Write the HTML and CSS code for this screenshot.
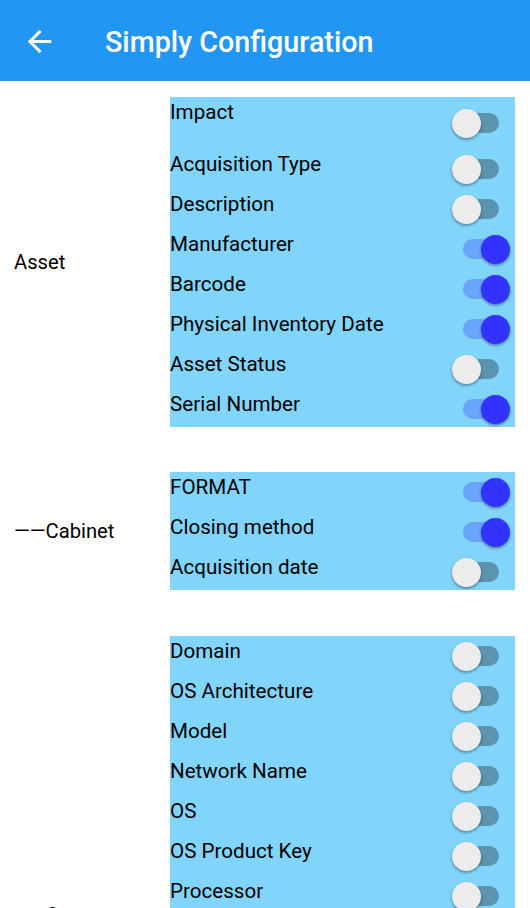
FILE: index.html
```html
<!DOCTYPE html>
<html lang="en">
<head>
<meta charset="utf-8">
<title>Simply Configuration</title>
<link rel="stylesheet" href="styles.css">
</head>
<body>
<header class="appbar">
  <button class="back" aria-label="Back">
    <svg viewBox="0 0 24 24" width="35" height="35"><path fill="#fff" d="M20 11H7.83l5.59-5.59L12 4l-8 8 8 8 1.41-1.41L7.83 13H20v-2z"/></svg>
  </button>
  <h1 class="title">Simply Configuration</h1>
</header>
<main class="content">
  <section class="group">
    <div class="group-label">Asset</div>
    <div class="panel">
      <div class="row row-tall"><span class="row-label">Impact</span><span class="switch"><span class="track"></span><span class="thumb"></span></span></div>
      <div class="row"><span class="row-label">Acquisition Type</span><span class="switch"><span class="track"></span><span class="thumb"></span></span></div>
      <div class="row"><span class="row-label">Description</span><span class="switch"><span class="track"></span><span class="thumb"></span></span></div>
      <div class="row"><span class="row-label">Manufacturer</span><span class="switch on"><span class="track"></span><span class="thumb"></span></span></div>
      <div class="row"><span class="row-label">Barcode</span><span class="switch on"><span class="track"></span><span class="thumb"></span></span></div>
      <div class="row"><span class="row-label">Physical Inventory Date</span><span class="switch on"><span class="track"></span><span class="thumb"></span></span></div>
      <div class="row"><span class="row-label">Asset Status</span><span class="switch"><span class="track"></span><span class="thumb"></span></span></div>
      <div class="row"><span class="row-label">Serial Number</span><span class="switch on"><span class="track"></span><span class="thumb"></span></span></div>
    </div>
  </section>
  <section class="group">
    <div class="group-label">——Cabinet</div>
    <div class="panel">
      <div class="row"><span class="row-label">FORMAT</span><span class="switch on"><span class="track"></span><span class="thumb"></span></span></div>
      <div class="row"><span class="row-label">Closing method</span><span class="switch on"><span class="track"></span><span class="thumb"></span></span></div>
      <div class="row"><span class="row-label">Acquisition date</span><span class="switch"><span class="track"></span><span class="thumb"></span></span></div>
    </div>
  </section>
  <section class="group group-last">
    <div class="group-label">——Computer</div>
    <div class="panel">
      <div class="row"><span class="row-label">Domain</span><span class="switch"><span class="track"></span><span class="thumb"></span></span></div>
      <div class="row"><span class="row-label">OS Architecture</span><span class="switch"><span class="track"></span><span class="thumb"></span></span></div>
      <div class="row"><span class="row-label">Model</span><span class="switch"><span class="track"></span><span class="thumb"></span></span></div>
      <div class="row"><span class="row-label">Network Name</span><span class="switch"><span class="track"></span><span class="thumb"></span></span></div>
      <div class="row"><span class="row-label">OS</span><span class="switch"><span class="track"></span><span class="thumb"></span></span></div>
      <div class="row"><span class="row-label">OS Product Key</span><span class="switch"><span class="track"></span><span class="thumb"></span></span></div>
      <div class="row"><span class="row-label">Processor</span><span class="switch"><span class="track"></span><span class="thumb"></span></span></div>
      <div class="row"><span class="row-label">RAM</span><span class="switch"><span class="track"></span><span class="thumb"></span></span></div>
      <div class="row"><span class="row-label">Hard Disk</span><span class="switch"><span class="track"></span><span class="thumb"></span></span></div>
      <div class="row"><span class="row-label">IP Address</span><span class="switch"><span class="track"></span><span class="thumb"></span></span></div>
      <div class="row"><span class="row-label">MAC Address</span><span class="switch"><span class="track"></span><span class="thumb"></span></span></div>
      <div class="row"><span class="row-label">OS Version</span><span class="switch"><span class="track"></span><span class="thumb"></span></span></div>
      <div class="row"><span class="row-label">Service Pack</span><span class="switch"><span class="track"></span><span class="thumb"></span></span></div>
      <div class="row"><span class="row-label">Serial Number</span><span class="switch"><span class="track"></span><span class="thumb"></span></span></div>
    </div>
  </section>
</main>
</body>
</html>
```

FILE: styles.css
```css
* { box-sizing: border-box; }

html, body {
  margin: 0;
  padding: 0;
  background: #ffffff;
  font-family: Roboto, "Noto Sans", "Liberation Sans", sans-serif;
  color: #000;
}

.appbar {
  height: 81px;
  background: #2196f3;
  display: flex;
  align-items: center;
}

.back {
  width: 35px;
  height: 35px;
  margin-left: 22px;
  margin-top: 1px;
  padding: 0;
  border: 0;
  background: none;
  display: flex;
}

.title {
  margin: 0 0 0 48px;
  padding-top: 3px;
  font-size: 28.7px;
  font-weight: 500;
  color: #fff;
  letter-spacing: 0;
}

.content {
  padding-top: 16px;
  display: flex;
  flex-direction: column;
  gap: 45px;
}

.group {
  display: flex;
  align-items: center;
}

.group-last { margin-top: 1px; }

.group-label {
  width: 170px;
  padding-left: 14px;
  font-size: 20.2px;
  flex-shrink: 0;
}

.panel {
  flex: 1;
  margin-right: 15px;
  background: #81d4fa;
}

.row {
  height: 40px;
  display: flex;
  justify-content: space-between;
  align-items: center;
}

.row:last-child { height: 38px; }

.row-tall { height: 52px; }

.row-label {
  align-self: flex-start;
  font-size: 20.6px;
  line-height: 30px;
}

.switch {
  position: relative;
  width: 58px;
  height: 29px;
  margin-right: 5px;
  flex-shrink: 0;
}

.row:last-child .switch { margin-bottom: -2px; }

.track {
  position: absolute;
  left: 11px;
  top: 4.5px;
  width: 36px;
  height: 20px;
  border-radius: 10px;
  background: #5a94af;
}

.thumb {
  position: absolute;
  left: 0;
  top: 0;
  width: 29px;
  height: 29px;
  border-radius: 50%;
  background: #ececec;
  box-shadow: 0 1.5px 3px rgba(0, 0, 0, 0.4);
}

.switch.on .track { background: #6aa4fb; }

.switch.on .thumb {
  left: 29px;
  background: #3333ff;
}
```
